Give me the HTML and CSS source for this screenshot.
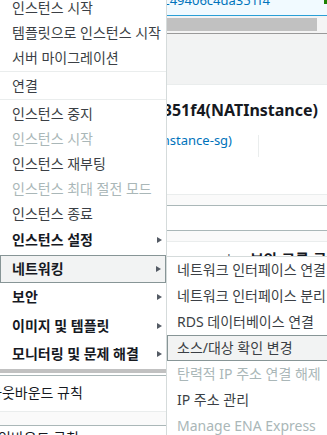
FILE: index.html
```html
<!DOCTYPE html>
<html lang="ko">
<head>
  <meta charset="UTF-8">
  <meta name="viewport" content="width=device-width, initial-scale=1.0">
  <title>인스턴스 상태 메뉴</title>
  <link rel="stylesheet" href="styles.css">
</head>
<body>
  <!-- page behind the menu -->
  <div class="page">
    <div class="sel-row">
      <span class="sel-id">i-0c49406c4da351f4</span>
      <span class="status"></span>
    </div>
    <div class="hscroll"><div class="thumb"></div></div>
    <div class="gray-band"></div>
    <div class="detail">
      <div class="title">i-0c49406c4da351f4(NATInstance)</div>
      <div class="meta">
        <span class="link">sg-0a1b (NATInstance-sg)</span>
        <span class="divider"></span>
      </div>
    </div>
    <div class="band"></div>
    <div class="blank"></div>
    <div class="band light"></div>
    <div class="rules-head">
      <span class="bar">|</span>
      <span class="head-text">보안 그룹 규칙</span>
    </div>
    <div class="thumb-bar"></div>
    <div class="outbound">아웃바운드 규칙</div>
    <div class="band tall"></div>
    <div class="last-row">인바운드 규칙</div>
  </div>

  <!-- instance actions dropdown -->
  <ul class="menu">
    <li class="item">인스턴스 시작</li>
    <li class="item">템플릿으로 인스턴스 시작</li>
    <li class="item">서버 마이그레이션</li>
    <li class="sep"></li>
    <li class="item">연결</li>
    <li class="sep"></li>
    <li class="item">인스턴스 중지</li>
    <li class="item disabled">인스턴스 시작</li>
    <li class="item">인스턴스 재부팅</li>
    <li class="item disabled">인스턴스 최대 절전 모드</li>
    <li class="item">인스턴스 종료</li>
    <li class="item group">인스턴스 설정<span class="arrow"></span></li>
    <li class="item group active">네트워킹<span class="arrow"></span></li>
    <li class="item group">보안<span class="arrow"></span></li>
    <li class="item group">이미지 및 템플릿<span class="arrow"></span></li>
    <li class="item group">모니터링 및 문제 해결<span class="arrow"></span></li>
  </ul>

  <ul class="submenu">
    <li class="item">네트워크 인터페이스 연결</li>
    <li class="item">네트워크 인터페이스 분리</li>
    <li class="item">RDS 데이터베이스 연결</li>
    <li class="item active">소스/대상 확인 변경</li>
    <li class="item disabled">탄력적 IP 주소 연결 해제</li>
    <li class="item">IP 주소 관리</li>
    <li class="item disabled">Manage ENA Express</li>
  </ul>
</body>
</html>
```

FILE: styles.css
```css
body {
  margin: 0;
  width: 327px;
  height: 435px;
  overflow: hidden;
  position: relative;
  background: #fff;
  font-family: "Noto Sans", "Noto Sans CJK KR", sans-serif;
  color: #16191f;
}

/* background page */
.page { white-space: nowrap; }
.sel-row {
  height: 15px;
  display: flex;
  background: #f1faff;
  border-bottom: 1px solid #2a9fd6;
  overflow: hidden;
}
.sel-id {
  width: 270px;
  text-align: right;
  font-size: 13px;
  line-height: 10px;
  height: 10px;
  margin-top: -5px;
  color: #0073bb;
}
.status {
  margin-left: auto;
  width: 3px;
  height: 4px;
  background: #1d8102;
}
.hscroll {
  height: 15px;
  padding-top: 2px;
  background: #f4f4f4;
  border-bottom: 1px solid #9a9a9a;
}
.thumb {
  width: 317px;
  height: 13px;
  background: #c1c1c1;
}
.gray-band {
  height: 50px;
  background: #f2f3f3;
  border-bottom: 1px solid #eaeded;
}
.detail {
  height: 96px;
  padding-top: 13px;
  border-bottom: 1px solid #eaeded;
}
.title {
  width: 318px;
  text-align: right;
  font-size: 16px;
  font-weight: 700;
  line-height: 24px;
}
.meta {
  display: flex;
  align-items: flex-start;
  margin-top: 8px;
}
.link {
  width: 232px;
  text-align: right;
  font-size: 13px;
  line-height: 20px;
  color: #0073bb;
}
.divider {
  width: 1px;
  height: 22px;
  margin: 5px 0 0 26px;
  background: #eaeded;
}
.band {
  height: 10px;
  background: #fafafa;
  border-bottom: 1px solid #aab7b8;
}
.band.light { border-bottom-color: #eaeded; }
.band.tall {
  height: 13px;
  border-top: 1px solid #eaeded;
}
.blank {
  height: 24px;
  border-bottom: 1px solid #aab7b8;
}
.rules-head {
  display: grid;
  grid-template-columns: 235px auto;
  height: 118px;
  padding-top: 7px;
  line-height: 20px;
  font-size: 15px;
  font-weight: 700;
}
.rules-head .bar { text-align: right; font-weight: 400; color: #545b64; padding-right: 2px; }
.rules-head .head-text { padding-left: 15px; }
.thumb-bar {
  height: 6px;
  margin-bottom: 2px;
  background: #c1c1c1;
}
.outbound {
  height: 35px;
  line-height: 34px;
  border-top: 1px solid #aab7b8;
  margin-left: -11px;
  font-size: 14px;
}
.last-row {
  margin-left: -2px;
  padding-top: 2px;
  line-height: 20px;
  font-size: 14px;
}

/* dropdown menus */
.menu, .submenu {
  list-style: none;
  margin: 0;
  padding: 0;
  position: absolute;
  background: #fff;
  white-space: nowrap;
}
.menu {
  left: 0;
  top: -5px;
  width: 166px;
  border-right: 1px solid #d5dbdb;
}
.submenu {
  left: 166px;
  top: 256px;
  width: 200px;
  border: 1px solid #d5dbdb;
}
.item {
  box-sizing: border-box;
  height: 25px;
  padding-left: 12px;
  line-height: 25px;
  font-size: 14px;
  color: #3b3f45;
}
.item.disabled { color: #aab7b8; }
.sep {
  height: 1px;
  margin: 1px 0;
  background: #eaeded;
}
.item.group {
  display: flex;
  align-items: center;
  justify-content: space-between;
  height: 28.5px;
  line-height: 28px;
  padding-right: 4px;
  font-weight: 700;
  color: #16191f;
}
.arrow {
  width: 0;
  height: 0;
  border-left: 5px solid #545b64;
  border-top: 3.5px solid transparent;
  border-bottom: 3.5px solid transparent;
}
.item.active {
  background: #f2f3f3;
  border: 1px solid #879596;
  padding-left: 11px;
  line-height: 26px;
}
.submenu .item {
  height: 26px;
  line-height: 26px;
  padding-left: 10px;
}
.submenu .item.active {
  padding-left: 9px;
  line-height: 24px;
}
```
